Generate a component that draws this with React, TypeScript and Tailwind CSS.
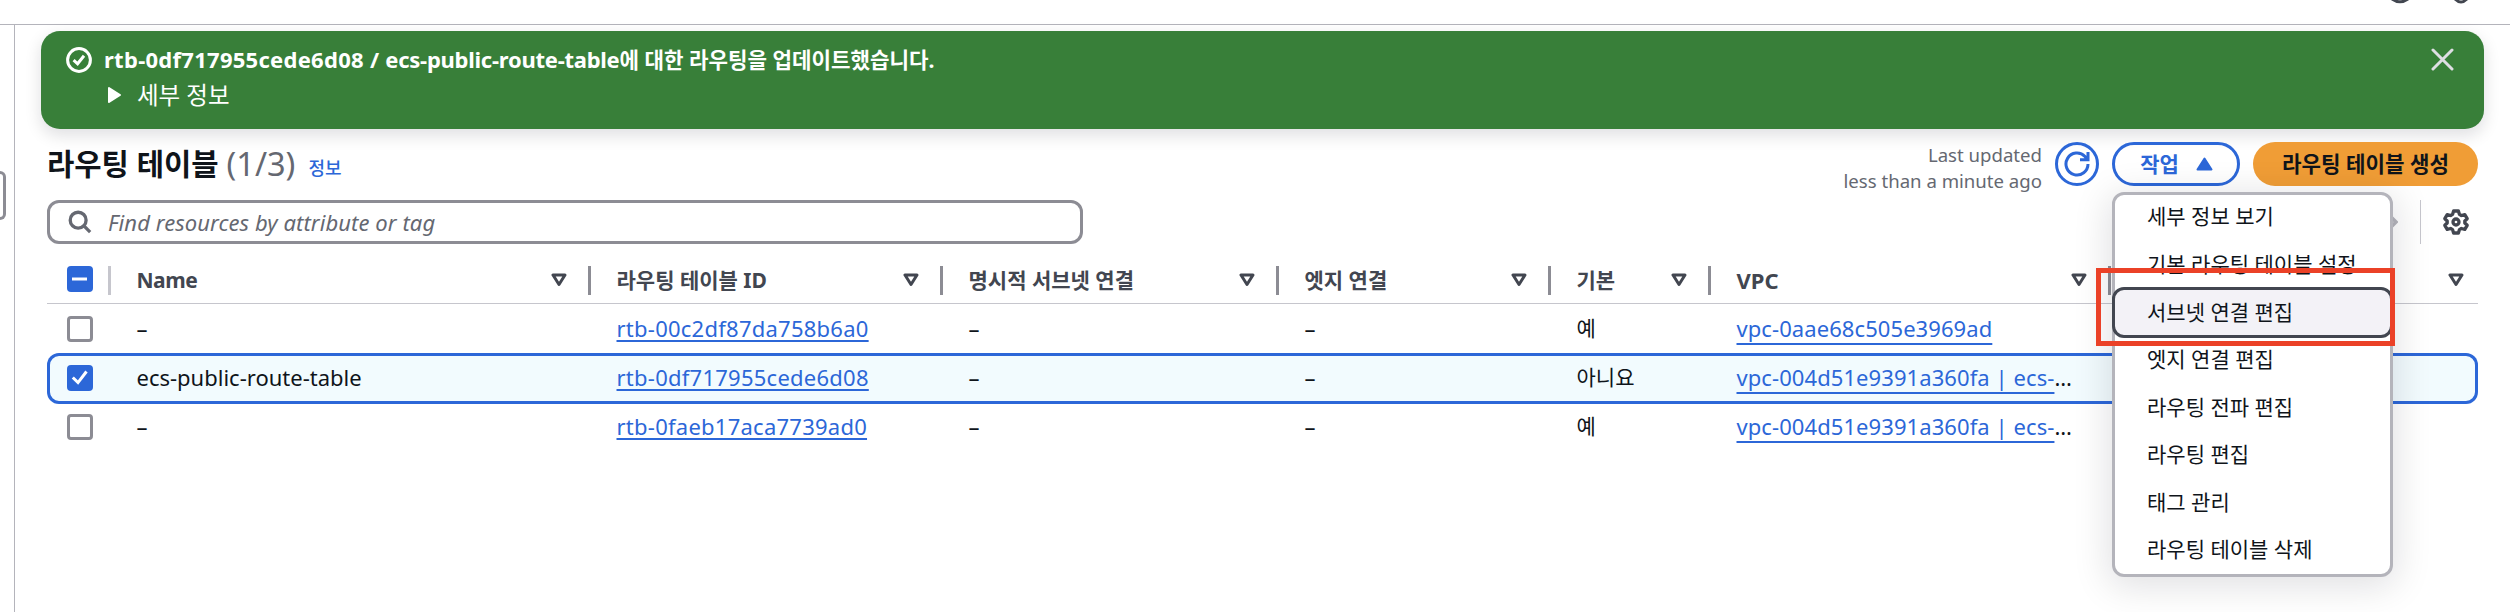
import React from "react";

const columns = ["Name", "라우팅 테이블 ID", "명시적 서브넷 연결", "엣지 연결", "기본", "VPC", ""];

type Row = { name: string; id: string; main: string; vpc: string; more?: boolean; selected?: boolean };

const rows: Row[] = [
  { name: "–", id: "rtb-00c2df87da758b6a0", main: "예", vpc: "vpc-0aae68c505e3969ad" },
  { name: "ecs-public-route-table", id: "rtb-0df717955cede6d08", main: "아니요", vpc: "vpc-004d51e9391a360fa | ecs-", more: true, selected: true },
  { name: "–", id: "rtb-0faeb17aca7739ad0", main: "예", vpc: "vpc-004d51e9391a360fa | ecs-", more: true },
];

const rowStyles = [
  "h-[49px]",
  "h-[51px] rounded-[12px] bg-[#f2fbfe] pb-[2px] shadow-[inset_0_0_0_3px_#2c67d8]",
  "h-[46px]",
];

const actions = ["세부 정보 보기", "기본 라우팅 테이블 설정", "서브넷 연결 편집", "엣지 연결 편집", "라우팅 전파 편집", "라우팅 편집", "태그 관리", "라우팅 테이블 삭제"];

const grid = "grid grid-cols-[64px_480px_352px_336px_272px_160px_400px_367px]";

function Checkbox({ state }: { state: "off" | "on" | "mixed" }) {
  if (state === "off") return <span className="block size-[26px] rounded-[4px] border-3 border-[#8c8c94] bg-white" />;
  return (
    <span className="block size-[26px] rounded-[4px] bg-[#2c67d8]">
      <svg viewBox="0 0 26 26" className="size-[26px]" fill="none" stroke="#fff" strokeWidth="3">
        {state === "mixed" ? <path d="M5 13H20" /> : <path d="M5.8 12.5L11 17.6L19.5 6.5" />}
      </svg>
    </span>
  );
}

export default function App() {
  return (
    <div className="relative flex h-[612px] w-[2510px] flex-col overflow-hidden bg-white font-['Noto_Sans','Noto_Sans_CJK_KR',sans-serif] text-[21px] leading-[30px] text-[#0f141a]">
      <header className="flex h-[25px] shrink-0 justify-end border-b border-[#b4b4bb] pr-[42px]">
        <svg viewBox="0 0 78 4" className="h-1 w-[78px]" fill="none" stroke="#424650" strokeWidth="3">
          <path d="M2 -1Q10 4.5 18 -1" />
          <path d="M65 -1Q71 5 77 -1" />
        </svg>
      </header>
      <div className="flex flex-1">
        <aside className="w-[15px] shrink-0 border-r border-[#b4b4bb] pt-[146px]">
          <div className="h-[49px] w-[6px] rounded-r-[10px] border-3 border-l-0 border-[#8c8c94]" />
        </aside>
        <main className="flex-1 px-[26px] pt-[6px]">
          <section className="flex h-[98px] justify-between rounded-[19px] bg-[#387f39] pt-[13px] pr-[30px] pl-[24px] text-white shadow-[0_6px_16px_1px_#0007161f]">
            <div className="flex gap-[11px]">
              <svg viewBox="0 0 28 28" className="mt-[2px] size-7" fill="none" stroke="#fff" strokeWidth="3">
                <circle cx="14" cy="14" r="11.4" />
                <path d="M8.6 14.2L12.6 17.8L19 9.8" />
              </svg>
              <div>
                <p className="text-[21.2px] font-bold">
                  <span className="text-[22px] tracking-[0.28px]">rtb-0df717955cede6d08 / </span>
                  <span className="text-[22px] tracking-[-0.25px]">ecs-public-route-table</span>
                  에 대한 라우팅을 업데이트했습니다.
                </p>
                <p className="mt-[5px] flex items-center gap-[15px] pl-[3px] text-[23.5px]">
                  <svg viewBox="0 0 15 18" className="h-[18px] w-[15px]" fill="#fff" stroke="#fff" strokeWidth="2" strokeLinejoin="round"><path d="M2 2L13 9L2 16Z" /></svg>
                  세부 정보
                </p>
              </div>
            </div>
            <svg viewBox="0 0 23 23" className="mt-[4px] size-[23px]" fill="none" stroke="#dedee3" strokeWidth="3" strokeLinecap="round"><path d="M2 2L21 21M21 2L2 21" /></svg>
          </section>

          <div className="px-[6px] pt-[13px]">
            <div className="flex h-[44px] items-center justify-between">
              <div className="mt-[5px] flex items-baseline">
                <h1 className="-translate-y-px text-[29.7px] font-bold">라우팅 테이블</h1>
                <span className="ml-[8px] text-[32.5px] text-[#656871]">(1/3)</span>
                <a className="ml-[13px] -translate-y-px text-[18px] font-medium text-[#2c67d8]">정보</a>
              </div>
              <div className="flex items-center gap-[13px]">
                <p className="mt-[7px] text-right text-[18.6px] leading-[26px] text-[#656871]">Last updated<br />less than a minute ago</p>
                <button className="flex size-[44px] items-center justify-center rounded-full border-3 border-[#2c67d8]">
                  <svg viewBox="0 0 26 26" className="size-[26px]" fill="none" stroke="#2c67d8" strokeWidth="3"><path d="M24 13A11 11 0 1 1 21 5.5L23.5 8.5M24 1V8.8H16" /></svg>
                </button>
                <div className="relative">
                  <button className="flex h-[44px] w-[128px] items-center justify-center gap-[17px] rounded-full border-3 border-[#2c67d8] pl-px font-bold text-[#2c67d8]">
                    작업
                    <svg viewBox="0 0 17 14" className="h-[14px] w-[17px]" fill="#2c67d8" stroke="#2c67d8" strokeWidth="2" strokeLinejoin="round"><path d="M8.5 1.5L15.5 12.5H1.5Z" /></svg>
                  </button>
                  <ul className="absolute top-[50px] left-0 z-20 h-[385px] w-[281px] rounded-[12px] border-3 border-[#b4b4bb] bg-white shadow-[0_6px_36px_4px_#0007161f]">
                    {actions.map((a, i) => (
                      <li key={a} className={i === 2 ? "-mx-[3px] -my-[1.7px] flex h-[51px] items-center rounded-[12px] border-3 border-[#424650] bg-[#f3f2f7] pb-px pl-[32px]" : i === 0 ? "-mt-[2px] flex h-[47.6px] items-center pb-px pl-[32px]" : "flex h-[47.6px] items-center pb-px pl-[32px]"}>{a}</li>
                    ))}
                  </ul>
                </div>
                <button className="h-[44px] w-[225px] rounded-full bg-[#f09d36] text-[21.2px] font-bold">라우팅 테이블 생성</button>
              </div>
            </div>

            <div className="mt-[14px] flex h-[44px] justify-between">
              <div className="flex w-[1036px] items-center gap-[16px] rounded-[12px] border-3 border-[#8c8c94] pl-[18px] text-[22px] tracking-[0.08px] text-[#656871] italic">
                <svg viewBox="0 0 26 26" className="size-[24px]" fill="none" stroke="#656871" strokeWidth="3.6"><circle cx="11" cy="11" r="8.6" /><path d="M17 17L24 24" /></svg>
                Find resources by attribute or tag
              </div>
              <div className="flex items-center pr-[8px]">
                <svg viewBox="0 0 10 18" className="mr-[22px] h-[18px] w-[10px]" fill="none" stroke="#b4b4bb" strokeWidth="3.5"><path d="M1 2L8 9L1 16" /></svg>
                <span className="mr-[21px] h-full w-px bg-[#c6c6cd]" />
                <svg viewBox="0 0 28 28" className="size-[28px]" fill="none" stroke="#424650" strokeWidth="3.3" strokeLinejoin="round">
                  <path d="M11.6 3H16.4L17.4 6.3L19.4 7.5L22.8 6.6L25.2 10.7L22.8 13V15L25.2 17.3L22.8 21.4L19.4 20.5L17.4 21.7L16.4 25H11.6L10.6 21.7L8.6 20.5L5.2 21.4L2.8 17.3L5.2 15V13L2.8 10.7L5.2 6.6L8.6 7.5L10.6 6.3Z" />
                  <circle cx="14" cy="14" r="3" />
                </svg>
              </div>
            </div>

            <div className={`${grid} h-[60px] items-center border-b border-[#c6c6cd] pt-[13px] font-bold text-[#424650]`}>
              <div className="flex h-[29px] border-r-3 border-[#c6c6cd] pl-[20px]"><Checkbox state="mixed" /></div>
              {columns.map((c, i) => (
                <div key={i} className={i === 6 ? "flex h-[29px] items-center justify-end pr-[14px]" : "flex h-[29px] items-center justify-between border-r-3 border-[#8c8c94] pr-[21px] pl-[25.5px]"}>
                  {c && <span className={c === "VPC" ? "pb-px text-[22px]" : c === "Name" ? "tracking-[-0.5px]" : ""}>{c}</span>}
                  <svg viewBox="0 0 16 14" className="h-[14px] w-[16px]" fill="none" stroke="#424650" strokeWidth="3" strokeLinejoin="round"><path d="M2 2H14L8 11.5Z" /></svg>
                </div>
              ))}
            </div>
            {rows.map((r, i) => (
              <div key={r.id} className={`${grid} items-center text-[22px] *:pb-[2px] *:pl-[25.5px] ${rowStyles[i]}`}>
                <div className="!pb-0 !pl-[20px]"><Checkbox state={r.selected ? "on" : "off"} /></div>
                <div>{r.name}</div>
                <div><a className="tracking-[0.25px] text-[#2c67d8] underline decoration-2 underline-offset-[3px] [text-decoration-skip-ink:none]">{r.id}</a></div>
                <div>–</div>
                <div>–</div>
                <div className="text-[21px]">{r.main}</div>
                <div><a className="tracking-[0.08px] text-[#2c67d8] underline decoration-2 underline-offset-[6px] [text-decoration-skip-ink:none]">{r.vpc}</a>{r.more && "…"}</div>
                <div />
              </div>
            ))}
          </div>
        </main>
      </div>
      <div className="absolute top-[268px] left-[2096px] z-30 h-[78px] w-[299px] border-[5px] border-[#eb4127]" />
    </div>
  );
}
